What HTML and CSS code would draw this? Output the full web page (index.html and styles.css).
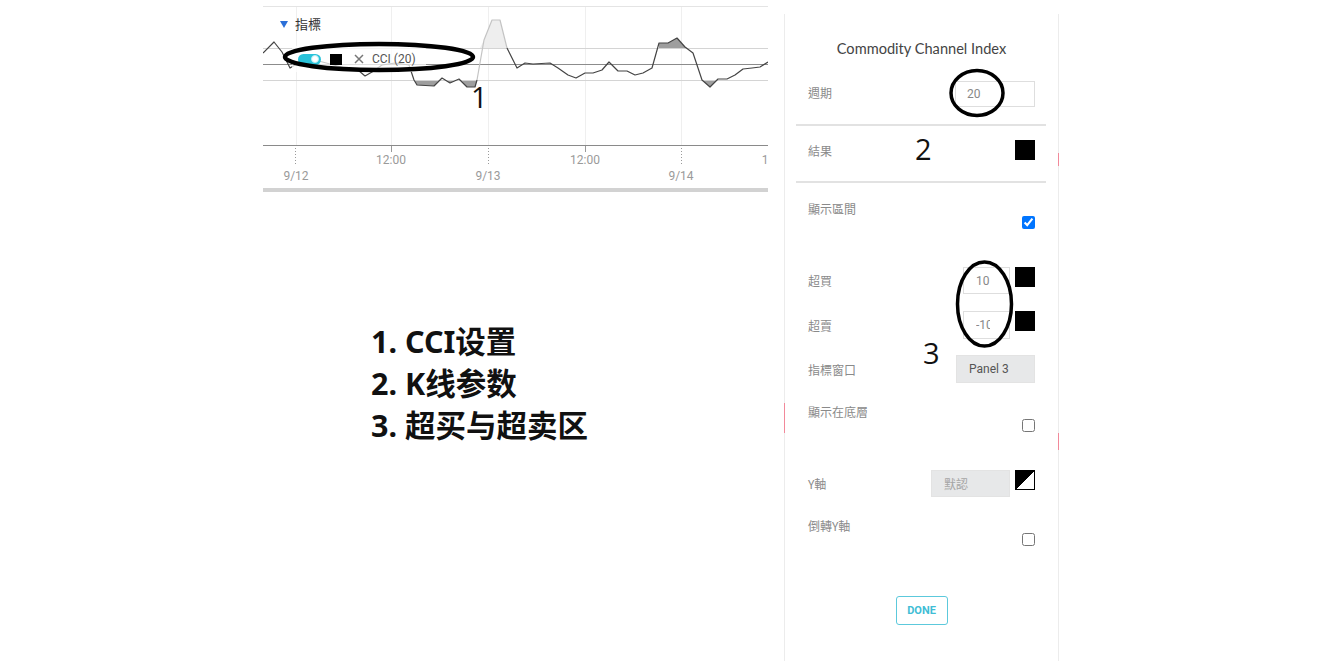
FILE: index.html
```html
<!DOCTYPE html>
<html>
<head>
<meta charset="utf-8">
<link rel="stylesheet" href="styles.css">
</head>
<body>
<div class="page">
  <div class="left">
    <div class="chart">
      <svg class="plot" width="505" height="192" viewBox="263 0 505 192">
        <line x1="263" y1="6.5" x2="768" y2="6.5" stroke="#e4e4e4"/>
        <g stroke="#efefef">
          <line x1="296.5" y1="7" x2="296.5" y2="145"/>
          <line x1="391.5" y1="7" x2="391.5" y2="145"/>
          <line x1="488.5" y1="7" x2="488.5" y2="145"/>
          <line x1="585.5" y1="7" x2="585.5" y2="145"/>
          <line x1="681.5" y1="7" x2="681.5" y2="145"/>
        </g>
        <polygon points="480,48 484,40 492,20 500,20 507,48" fill="#eeeeee"/>
        <polygon points="414,80 417,85 434,86 439,80 445,80 450,83 457,80 461,80 467,87 475,87 477,80" fill="#9e9e9e"/>
        <polygon points="659,48 659,43 668,43 677,38 685,47 687,48" fill="#9e9e9e"/>
        <polygon points="702,80 710,87 717,80" fill="#9e9e9e"/>
        <line x1="263" y1="48.5" x2="768" y2="48.5" stroke="#d4d4d4"/>
        <line x1="263" y1="64.5" x2="768" y2="64.5" stroke="#8c8c8c"/>
        <line x1="263" y1="80.5" x2="768" y2="80.5" stroke="#d4d4d4"/>
        <polyline fill="none" stroke="#444" stroke-width="1.2" stroke-linejoin="round" points="263,53 274,42 282,52 290,68 300,62 315,60 330,64 345,68 358,70 365,76 372,72 382,65 395,63 409,65 414,80 417,85 434,86 442,78 450,83 459,79 467,87 475,87 477,80"/>
        <polyline fill="none" stroke="#c4c4c4" stroke-width="1.2" stroke-linejoin="round" points="477,80 484,40 492,20 500,20 507,48"/>
        <polyline fill="none" stroke="#444" stroke-width="1.2" stroke-linejoin="round" points="507,48 509,52 517,68 525,63 533,64 550,63 558,68 568,75 576,78 585,73 593,73 602,70 609,62 618,71 627,71 635,75 643,73 652,68 659,43 668,43 677,38 685,47 693,53 702,80 710,87 718,79 727,79 735,75 743,69 752,68 760,67 768,62"/>
        <line x1="263" y1="145.5" x2="768" y2="145.5" stroke="#8a8a8a"/>
        <g stroke="#9a9a9a">
          <line x1="391.5" y1="146" x2="391.5" y2="152"/>
          <line x1="585.5" y1="146" x2="585.5" y2="152"/>
          <line x1="295.5" y1="148" x2="295.5" y2="166" stroke-dasharray="1 2"/>
          <line x1="488.5" y1="148" x2="488.5" y2="166" stroke-dasharray="1 2"/>
          <line x1="681.5" y1="148" x2="681.5" y2="166" stroke-dasharray="1 2"/>
        </g>
        <g class="axis-text" fill="#9a9a9a" text-anchor="middle">
          <text x="391" y="164">12:00</text>
          <text x="585" y="164">12:00</text>
          <text x="296" y="180">9/12</text>
          <text x="488" y="180">9/13</text>
          <text x="681" y="180">9/14</text>
          <text x="765" y="164">1</text>
        </g>
        <rect x="263" y="188" width="505" height="4" fill="#d2d2d2"/>
      </svg>
      <div class="chart-head"><span class="tri"></span><span class="head-text">指標</span></div>
      <div class="legend">
        <span class="toggle"><span class="knob"></span></span>
        <span class="legend-swatch"></span>
        <svg class="close" width="10" height="10" viewBox="0 0 10 10"><path d="M1 1L9 9M9 1L1 9" stroke="#777" stroke-width="1.5" fill="none"/></svg>
        <span class="legend-text">CCI (20)</span>
      </div>
    </div>
    <div class="notes">
      <p>1. CCI设置</p>
      <p>2. K线参数</p>
      <p>3. 超买与超卖区</p>
    </div>
  </div>

  <div class="dialog">
    <span class="peek peek-r1"></span>
    <span class="peek peek-r2"></span>
    <span class="peek peek-l1"></span>
    <div class="title">Commodity Channel Index</div>
    <div class="row r-period"><span class="lbl lbl-up">週期</span><div class="field f-period">20</div></div>
    <div class="divider d1"></div>
    <div class="row r-result"><span class="lbl">結果</span><span class="swatch"></span></div>
    <div class="divider d2"></div>
    <div class="stack s-range"><span class="lbl">顯示區間</span><input type="checkbox" class="cb" checked></div>
    <div class="row r-ob"><span class="lbl">超買</span><div class="ctl"><div class="field f-small"><span class="clip">10</span></div><span class="swatch"></span></div></div>
    <div class="row r-os"><span class="lbl">超賣</span><div class="ctl"><div class="field f-small f-tall"><span class="clip">-10</span></div><span class="swatch"></span></div></div>
    <div class="row r-panel"><span class="lbl">指標窗口</span><div class="field f-grey">Panel 3</div></div>
    <div class="stack s-bottom"><span class="lbl">顯示在底層</span><input type="checkbox" class="cb"></div>
    <div class="row r-yaxis"><span class="lbl">Y軸</span><div class="ctl"><div class="field f-grey f-muted">默認</div><span class="swatch swatch-diag"></span></div></div>
    <div class="stack s-invert"><span class="lbl">倒轉Y軸</span><input type="checkbox" class="cb"></div>
    <button class="done">DONE</button>
  </div>
</div>

<div class="annot">
  <svg width="1321" height="661" viewBox="0 0 1321 661">
    <g fill="none" stroke="#000">
      <ellipse cx="379" cy="57" rx="94" ry="13" stroke-width="4.5"/>
      <ellipse cx="977" cy="93" rx="26" ry="22.5" stroke-width="3.5"/>
      <ellipse cx="984.5" cy="304" rx="27" ry="42" stroke-width="3.5"/>
    </g>
  </svg>
  <span class="num n1">1</span>
  <span class="num n2">2</span>
  <span class="num n3">3</span>
</div>
</body>
</html>
```
FILE: styles.css
```css
* { box-sizing: border-box; }
html, body { margin: 0; padding: 0; background: #fff; }
body {
  width: 1321px;
  height: 661px;
  overflow: hidden;
  position: relative;
  font-family: Roboto, "Noto Sans CJK TC", sans-serif;
}
.page {
  display: flex;
  align-items: flex-start;
  gap: 16px;
  padding-left: 263px;
  height: 661px;
}
.left { width: 505px; flex: none; }

/* chart */
.chart { position: relative; height: 192px; overflow: hidden; }
.plot { display: block; }
.axis-text { font-family: Roboto, sans-serif; font-size: 12px; }
.chart-head {
  position: absolute;
  left: 17px;
  top: 16px;
  display: flex;
  align-items: center;
  gap: 7px;
  font-size: 13px;
  line-height: 16px;
  color: #333;
}
.tri {
  width: 0; height: 0;
  border-left: 4px solid transparent;
  border-right: 4px solid transparent;
  border-top: 7px solid #2b6fd8;
}
.head-text { font-family: "Noto Sans CJK TC", sans-serif; }
.legend {
  position: absolute;
  left: 29px;
  top: 46px;
  display: flex;
  align-items: center;
  padding: 7px 10px 7px 6px;
  background: rgba(255,255,255,0.72);
}
.toggle {
  display: flex;
  align-items: center;
  justify-content: flex-end;
  width: 23px;
  height: 11px;
  border-radius: 6px;
  background: #2ac3da;
  padding-right: 2px;
}
.knob {
  width: 8px; height: 8px;
  border-radius: 50%;
  background: #fff;
  border: 1px solid #b8eef5;
}
.legend-swatch { width: 12px; height: 11px; background: #000; margin-left: 9px; }
.close { margin-left: 12px; display: block; }
.legend-text { margin-left: 8px; font-size: 12px; line-height: 12px; color: #555; }

/* notes */
.notes {
  margin-top: 128px;
  padding-left: 108px;
  font-family: "Noto Sans", "Noto Sans CJK SC", sans-serif;
  font-weight: 700;
  font-size: 30.5px;
  line-height: 42px;
  color: #111;
}
.notes p { margin: 0; white-space: nowrap; }

/* dialog */
.dialog {
  position: relative;
  flex: none;
  width: 275px;
  height: 647px;
  margin-top: 14px;
  border-left: 1px solid #ececec;
  border-right: 1px solid #ececec;
  padding: 27px 23px 0 23px;
  display: flex;
  flex-direction: column;
}
.peek { position: absolute; width: 1px; background: #f2899a; }
.peek-r1 { right: -1px; top: 139px; height: 13px; }
.peek-r2 { right: -1px; top: 419px; height: 17px; }
.peek-l1 { left: -1px; top: 389px; height: 30px; }

.title {
  font-family: Lato, sans-serif;
  font-size: 14.6px;
  line-height: 16px;
  color: #444;
  text-align: center;
}
.lbl {
  font-family: "Noto Sans CJK TC", sans-serif;
  font-size: 12px;
  line-height: 15px;
  color: #8a8a8a;
}
.lbl-up { margin-bottom: 4px; }
.row {
  display: flex;
  justify-content: space-between;
  align-items: center;
}
.stack { display: flex; flex-direction: column; }
.stack .cb { align-self: flex-end; }
.ctl { display: flex; align-items: flex-start; gap: 5px; height: 100%; }
.field {
  border: 1px solid #dedede;
  font-family: Roboto, "Noto Sans CJK TC", sans-serif;
  font-size: 12px;
  color: #888;
  white-space: nowrap;
  overflow: hidden;
  display: flex;
  align-items: center;
}
.clip { display: block; width: 14px; overflow: hidden; white-space: nowrap; }
.swatch { width: 20px; height: 20px; background: #000; flex: none; }
.swatch-diag {
  border: 1.5px solid #000;
  background: linear-gradient(to bottom right, #000 50%, #fff 50%);
}
.cb { margin: 0; width: 13px; height: 13px; }

.r-period { margin-top: 24px; height: 26px; }
.f-period { width: 80px; height: 26px; padding-left: 11px; }
.divider { height: 2px; background: #e2e2e2; margin-left: -12px; margin-right: -11px; }
.d1 { margin-top: 17px; }
.r-result { margin-top: 14px; height: 20px; }
.d2 { margin-top: 21px; }
.s-range { margin-top: 18px; }
.r-ob { margin-top: 38px; height: 27px; }
.f-small { width: 47px; height: 27px; padding: 0 0 0 12px; }
.f-tall { height: 28px; }
.r-os { margin-top: 17px; height: 28px; }
.r-panel { margin-top: 16px; height: 28px; }
.f-grey { width: 79px; height: 28px; padding-left: 12px; background: #e7e8e9; border-color: #e3e3e3; color: #555; }
.f-muted { height: 27px; color: #a5a5a5; }
.s-bottom { margin-top: 21px; }
.r-yaxis { margin-top: 38px; height: 27px; }
.s-invert { margin-top: 21px; }
.done {
  margin-top: 50px;
  align-self: center;
  width: 52px;
  height: 29px;
  padding: 0;
  background: #fff;
  border: 1px solid #5cc9dc;
  border-radius: 3px;
  font-family: Roboto, sans-serif;
  font-weight: 700;
  font-size: 11px;
  color: #40bdd5;
}

/* annotations */
.annot {
  position: absolute;
  left: 0; top: 0;
  width: 1321px; height: 661px;
  pointer-events: none;
}
.annot svg { display: block; }
.num {
  position: absolute;
  font-family: "Open Sans", sans-serif;
  font-size: 29px;
  line-height: 29px;
  color: #111;
}
.n1 { left: 471px; top: 82px; }
.n2 { left: 915px; top: 134px; }
.n3 { left: 923px; top: 338px; }
```
